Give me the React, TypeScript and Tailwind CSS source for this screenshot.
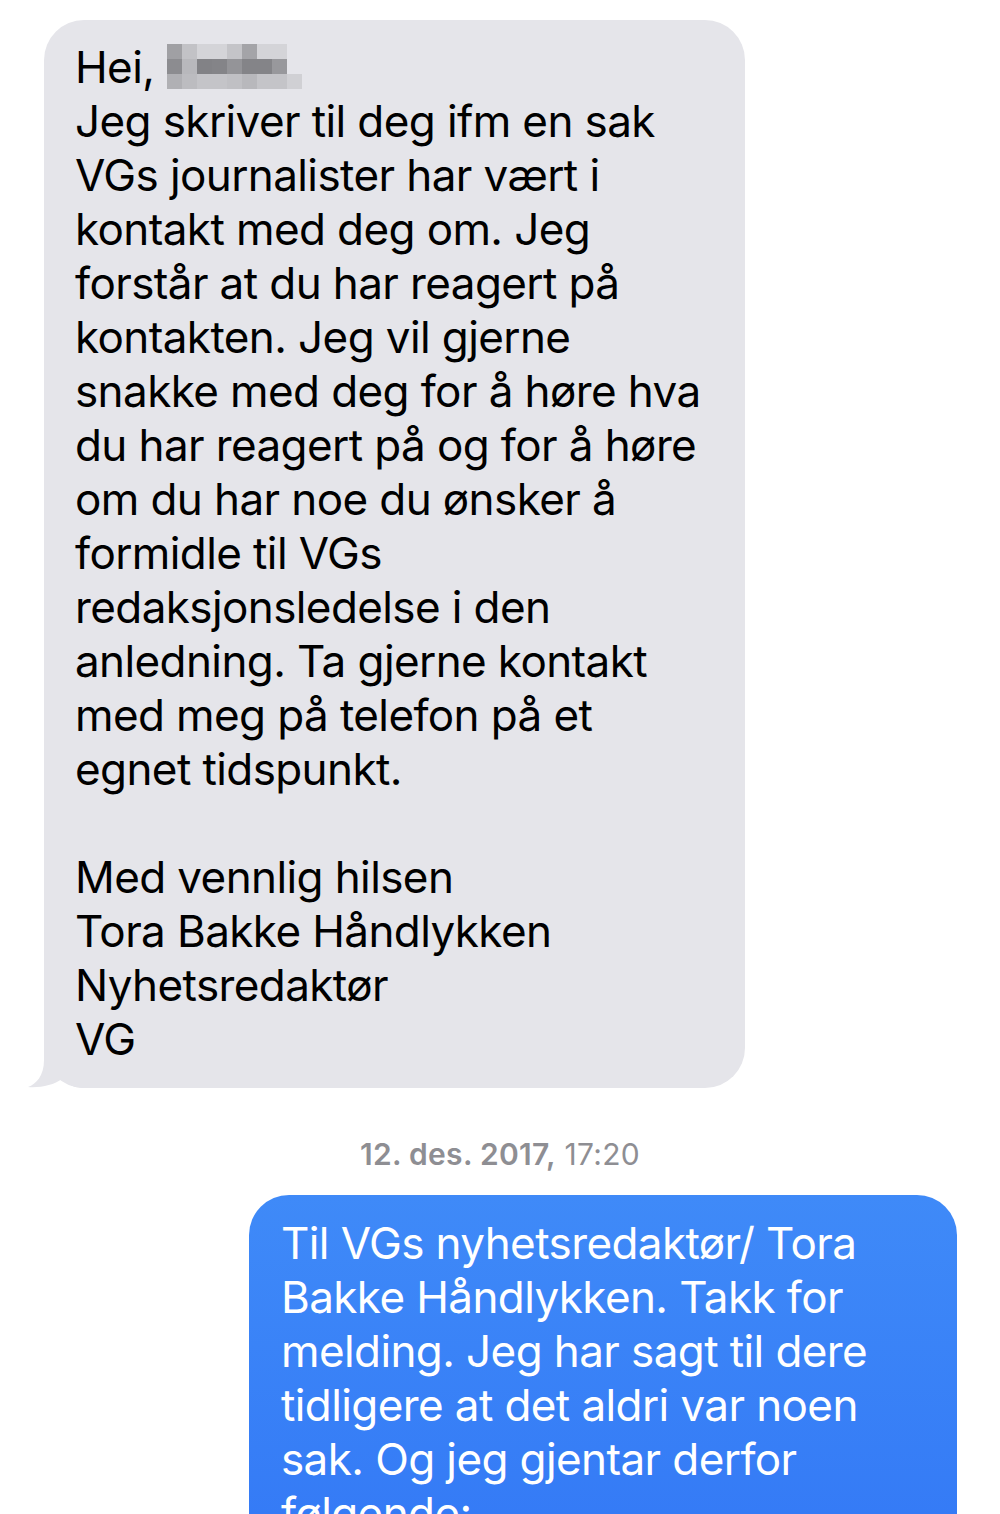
import React from "react";

const greyLines = [
  "Jeg skriver til deg ifm en sak",
  "VGs journalister har vært i",
  "kontakt med deg om. Jeg",
  "forstår at du har reagert på",
  "kontakten. Jeg vil gjerne",
  "snakke med deg for å høre hva",
  "du har reagert på og for å høre",
  "om du har noe du ønsker å",
  "formidle til VGs",
  "redaksjonsledelse i den",
  "anledning. Ta gjerne kontakt",
  "med meg på telefon på et",
  "egnet tidspunkt.",
  "",
  "Med vennlig hilsen",
  "Tora Bakke Håndlykken",
  "Nyhetsredaktør",
  "VG",
];

const blueLines = [
  "Til VGs nyhetsredaktør/ Tora",
  "Bakke Håndlykken. Takk for",
  "melding. Jeg har sagt til dere",
  "tidligere at det aldri var noen",
  "sak. Og jeg gjentar derfor",
  "følgende:",
  "",
];

// pixelated name, 15px blocks
const blur = [
  ["#a0a0a4", "#c2c2c6", "#d4d4d8", "#d4d4d8", "#c4c4c8", "#a4a4a8", "#d4d4d8", "#d4d4d8"],
  ["#8c8c90", "#b8b8bc", "#828286", "#848488", "#949498", "#848488", "#848488", "#98989c"],
  ["#b0b0b4", "#bcbcc0", "#c4c4c8", "#c4c4c8", "#c0c0c4", "#b8b8bc", "#c4c4c8", "#c4c4c8", "#d0d0d4"],
];

function Pixelated() {
  return (
    <span className="inline-flex flex-col align-middle ml-[13px] -mt-[2px]">
      {blur.map((row, i) => (
        <span key={i} className="flex">
          {row.map((c, j) => (
            <span key={j} className="block w-[15px] h-[15px]" style={{ backgroundColor: c }} />
          ))}
        </span>
      ))}
    </span>
  );
}

export default function App() {
  return (
    <div
      className="w-[1000px] h-[1514px] overflow-hidden bg-white pt-[20px]"
      style={{ fontFamily: "Inter, 'Noto Sans', sans-serif" }}
    >
      <div className="relative ml-[44px] w-[701px] rounded-[40px] bg-[#e5e5ea] pl-[31px] pt-[20px] pb-[22px]">
        <svg
          className="absolute left-[-16px] bottom-0"
          width="60"
          height="50"
          viewBox="0 0 60 50"
        >
          <path
            d="M16 0 L16 22 C16 38 8 46 0 49 C12 50 26 47 34 41 C40 46 46 50 55 50 L60 50 L60 0 Z"
            fill="#e5e5ea"
          />
        </svg>
        <div className="relative text-[44px] leading-[54px] text-black tracking-[-0.6px]">
          <div className="flex items-center whitespace-nowrap">
            Hei,
            <Pixelated />
          </div>
          {greyLines.map((l, i) => (
            <div key={i} className="whitespace-nowrap h-[54px]">
              {l}
            </div>
          ))}
        </div>
      </div>

      <div className="mt-[49px] text-center text-[30px] leading-[34px] tracking-[0.3px] text-[#8e8e93]">
        <span className="font-semibold">12. des. 2017,</span> 17:20
      </div>

      <div className="mt-[24px] ml-[249px] w-[708px] rounded-[40px] bg-gradient-to-b from-[#3f8af8] to-[#3276f5] pl-[32px] pt-[21px] pb-[22px]">
        <div className="text-[44px] leading-[54px] text-white tracking-[-0.6px]">
          {blueLines.map((l, i) => (
            <div key={i} className="whitespace-nowrap h-[54px]">
              {l}
            </div>
          ))}
        </div>
      </div>
    </div>
  );
}
